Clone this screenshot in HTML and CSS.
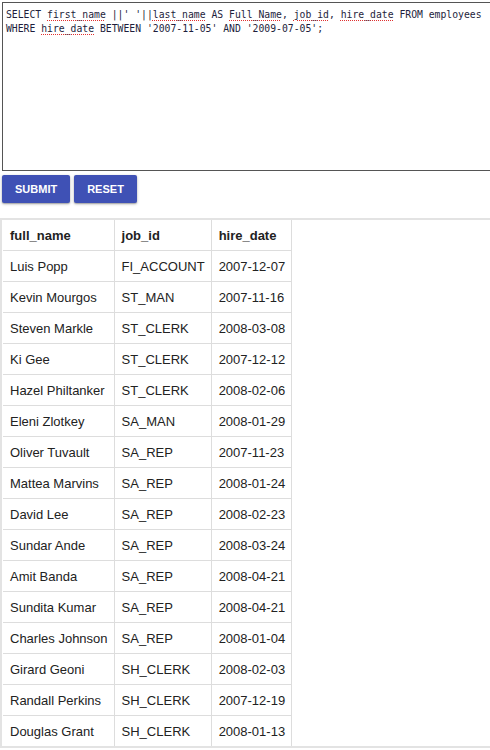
FILE: index.html
```html
<!DOCTYPE html>
<html>
<head>
<meta charset="utf-8">
<link rel="stylesheet" href="styles.css">
</head>
<body>
<div class="page">
  <div class="editor"><div class="line">SELECT <span class="sq">first_name</span> ||' '||<span class="sq">last_name</span> AS <span class="sq">Full_Name</span>, <span class="sq">job_id</span>, <span class="sq">hire_date</span> FROM employees</div><div class="line">WHERE <span class="sq">hire_date</span> BETWEEN '2007-11-05' AND '2009-07-05';</div></div>
  <div class="actions">
    <button class="btn">SUBMIT</button>
    <button class="btn">RESET</button>
  </div>
  <div class="results">
    <table class="grid">
      <thead>
        <tr><th>full_name</th><th>job_id</th><th>hire_date</th></tr>
      </thead>
      <tbody>
        <tr><td>Luis Popp</td><td>FI_ACCOUNT</td><td>2007-12-07</td></tr>
        <tr><td>Kevin Mourgos</td><td>ST_MAN</td><td>2007-11-16</td></tr>
        <tr><td>Steven Markle</td><td>ST_CLERK</td><td>2008-03-08</td></tr>
        <tr><td>Ki Gee</td><td>ST_CLERK</td><td>2007-12-12</td></tr>
        <tr><td>Hazel Philtanker</td><td>ST_CLERK</td><td>2008-02-06</td></tr>
        <tr><td>Eleni Zlotkey</td><td>SA_MAN</td><td>2008-01-29</td></tr>
        <tr><td>Oliver Tuvault</td><td>SA_REP</td><td>2007-11-23</td></tr>
        <tr><td>Mattea Marvins</td><td>SA_REP</td><td>2008-01-24</td></tr>
        <tr><td>David Lee</td><td>SA_REP</td><td>2008-02-23</td></tr>
        <tr><td>Sundar Ande</td><td>SA_REP</td><td>2008-03-24</td></tr>
        <tr><td>Amit Banda</td><td>SA_REP</td><td>2008-04-21</td></tr>
        <tr><td>Sundita Kumar</td><td>SA_REP</td><td>2008-04-21</td></tr>
        <tr><td>Charles Johnson</td><td>SA_REP</td><td>2008-01-04</td></tr>
        <tr><td>Girard Geoni</td><td>SH_CLERK</td><td>2008-02-03</td></tr>
        <tr><td>Randall Perkins</td><td>SH_CLERK</td><td>2007-12-19</td></tr>
        <tr><td>Douglas Grant</td><td>SH_CLERK</td><td>2008-01-13</td></tr>
      </tbody>
    </table>
  </div>
</div>
</body>
</html>
```

FILE: styles.css
```css
html, body {
  margin: 0;
  padding: 0;
  background: #fff;
  overflow: hidden;
}
.page {
  padding: 2px 0 0 2px;
  font-family: "Liberation Sans", Arial, sans-serif;
  color: #222;
}
.editor {
  box-sizing: border-box;
  width: 500px;
  height: 169px;
  border: 1px solid #555;
  padding: 5px 3px;
  font-family: "DejaVu Sans Mono", "Liberation Mono", monospace;
  font-size: 9.75px;
  line-height: 14px;
  color: #1e1e3c;
  white-space: pre;
}
.sq {
  text-decoration: underline dotted #e03030;
  text-decoration-thickness: 1px;
  text-underline-offset: 2px;
}
.actions {
  display: flex;
  gap: 4px;
  margin-top: 4px;
}
.btn {
  height: 28px;
  padding: 0 13px;
  border: none;
  border-radius: 2px;
  background: #3f51b5;
  color: #fff;
  font-family: "Liberation Sans", Arial, sans-serif;
  font-weight: bold;
  font-size: 11px;
  box-shadow: 0 1px 3px rgba(0,0,0,0.3), 0 1px 1px rgba(0,0,0,0.15);
}
.results {
  margin-top: 15px;
  margin-left: -2px;
  border: 2px solid #e3e3e3;
  border-right: none;
  padding-left: 1px;
}
.grid {
  border-collapse: collapse;
  font-size: 13px;
}
.grid th, .grid td {
  border: 1px solid #ddd;
  height: 30px;
  padding: 0 6px 0 7px;
  text-align: left;
  white-space: nowrap;
}
.grid th {
  font-weight: bold;
  color: #222;
}
.grid tr > :first-child { border-left: none; }
.grid thead th { border-top: none; }
.grid tbody tr:last-child td { border-bottom: none; }
```
